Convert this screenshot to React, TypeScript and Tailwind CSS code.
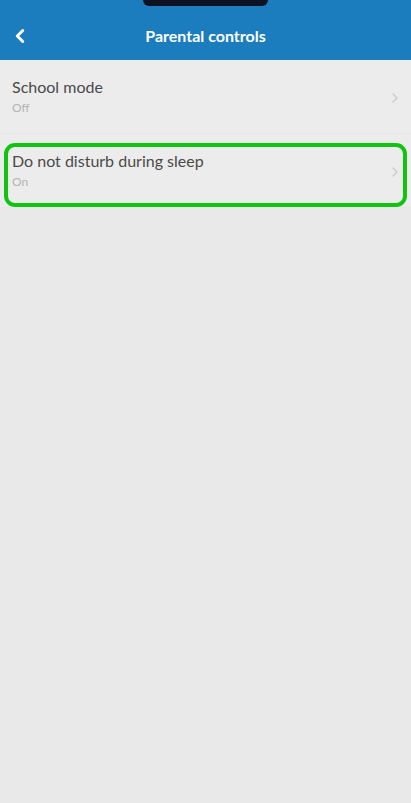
import { ChevronLeft, ChevronRight } from 'lucide-react';

type Row = { title: string; value: string; highlight?: boolean };

const rows: Row[] = [
  { title: 'School mode', value: 'Off' },
  { title: 'Do not disturb during sleep', value: 'On', highlight: true },
];

export default function App() {
  return (
    <div
      className="w-[411px] h-[803px] bg-[#e9e9e9] overflow-hidden"
      style={{ fontFamily: 'Lato, "Open Sans", sans-serif' }}
    >
      {/* Header */}
      <div className="relative h-[60px] bg-[#1b7dbd] flex items-center justify-center">
        <div className="absolute top-0 left-[143px] w-[125px] h-[6px] rounded-b-[8px] bg-[#0e1122]" />
        <button className="absolute left-[9px] top-[25px] text-white">
          <ChevronLeft className="w-[22px] h-[22px]" strokeWidth={3.2} />
        </button>
        <h1 className="text-white text-[16px] font-bold mt-[12px]">Parental controls</h1>
      </div>

      {/* Rows */}
      <div className="flex flex-col">
        {rows.map((row) => (
          <div
            key={row.title}
            className="relative h-[74px] flex items-center bg-[#ececec] border-b border-[#e6e6e6]"
          >
            <div className="flex-1 pl-[12px]">
              <p className="text-[16px] leading-[20px] text-[#4a4a4a]">{row.title}</p>
              <p className="text-[12px] leading-[16px] mt-[3px] text-[#b4b4b4]">{row.value}</p>
            </div>
            <ChevronRight className="w-[16px] h-[16px] mr-[8px] mt-[2px] text-[#c9c9c9]" strokeWidth={1.8} />
            {row.highlight && (
              <div className="absolute left-[4px] right-[4px] top-[9px] bottom-[0px] rounded-[11px] border-[4px] border-[#12c412]" />
            )}
          </div>
        ))}
      </div>
    </div>
  );
}
